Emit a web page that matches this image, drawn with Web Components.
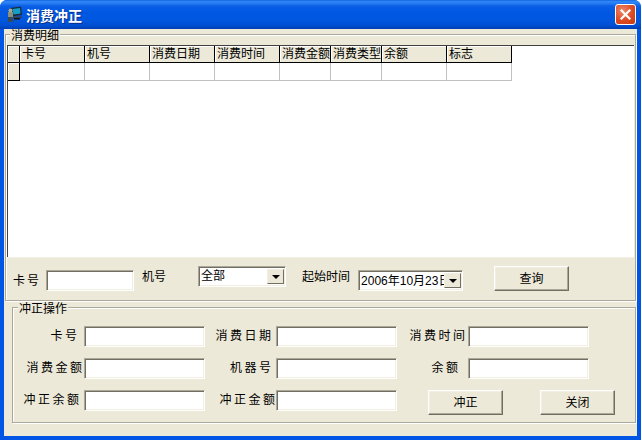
<!DOCTYPE html>
<html lang="zh"><head><meta charset="utf-8"><title>消费冲正</title>
<style>
html,body{margin:0;padding:0;background:#fff;overflow:hidden}
body{font:12px/16px "Liberation Sans","Noto Sans CJK SC",sans-serif;color:#000}
x-filter>*{flex:none}
</style></head><body>
<template id="t-window"><style>
:host{display:flex;flex-direction:column;width:641px;height:440px;box-sizing:border-box;background:#0055e5;border-radius:7px 7px 0 0;overflow:hidden}
.client{flex:1;margin:0 4px 4px 4px;background:#ece9d8;display:flex;flex-direction:column;padding:5px 1px 0 1px}
</style><slot name="title"></slot><div class="client"><slot></slot></div></template>

<template id="t-titlebar"><style>
:host{display:flex;align-items:center;height:29px;flex:none;box-sizing:border-box;padding:0 5px 0 7px;
background:linear-gradient(180deg,#0a58d8 0,#2f86f5 1px,#2a80f4 3px,#0a5fe6 6px,#0058e2 12px,#0056df 20px,#0050d4 25px,#0044c0 28px,#003cae 29px);color:#fff}
svg{flex:none;display:block}
.t{margin-left:3px;font:bold 14px/16px "Noto Sans CJK SC",sans-serif;text-shadow:1px 1px 0 #0a2f8c;white-space:nowrap}
.x{margin-left:auto;width:21px;height:21px;flex:none;box-sizing:border-box;border:1px solid #fff;border-radius:3px;background:radial-gradient(circle at 35% 30%,#f0896a,#dc4a22 55%,#c93a12);display:flex;align-items:center;justify-content:center}
</style>
<svg width="16" height="17" viewBox="0 0 16 17"><path d="M3 2L14 0.500L15 9L5 10.500Z" fill="#1d2c3c"/><path d="M5.500 3L13 2L13.500 7.500L6.500 8.500Z" fill="#12a0c8"/><rect x="6" y="10.500" width="9" height="1.500" fill="#39424c"/><rect x="1" y="6" width="5" height="5" fill="#8a8f80"/><circle cx="3.500" cy="4.500" r="2" fill="#b0a890"/><rect x="1" y="11" width="5" height="5" fill="#3a4a55"/><rect x="7" y="12" width="6" height="1.500" fill="#111"/></svg>
<span class="t"><slot></slot></span>
<span class="x"><svg width="11" height="11" viewBox="0 0 11 11"><path d="M1.500 1.500L9.500 9.500M9.500 1.500L1.500 9.500" stroke="#fff" stroke-width="2.200" stroke-linecap="square"/></svg></span></template>

<template id="t-group"><style>
:host{display:block;position:relative;box-sizing:border-box;border:1px solid #aca899;box-shadow:inset 1px 1px #fff,1px 1px #fff}
.legend{position:absolute;top:-6px;left:var(--legend-left,6px);background:#ece9d8;padding:0 1px;line-height:14px;white-space:nowrap}
</style><div class="legend"><slot name="legend"></slot></div><slot></slot></template>

<template id="t-grid"><style>
:host{display:block;box-sizing:border-box;background:#fff;height:212px;margin:10px 1px 0 1px;border-left:1px solid #404040;border-top:1px solid #404040;box-shadow:0 1px 0 #f1efe2}
.g{display:grid;grid-template-columns:12px 65px 65px 65px 65px 51px 51px 65px 65px;grid-template-rows:17px 18px;width:max-content}
.h{background:#ece9d8;box-sizing:border-box;border-right:1px solid #000;border-bottom:1px solid #000;box-shadow:inset 1px 1px #fff;padding:1px 0 0 2px;line-height:15px;white-space:nowrap;overflow:hidden}
.c{box-sizing:border-box;border-right:1px solid #c0c0c0;border-bottom:1px solid #c0c0c0}
.rh{background:#ece9d8;box-sizing:border-box;border-right:1px solid #000;border-bottom:1px solid #000;box-shadow:inset 1px 1px #fff}
</style><div class="g" id="g"></div></template>

<template id="t-filter"><style>
:host{display:flex;height:42px;align-items:flex-start;box-sizing:border-box}
</style><slot></slot></template>

<template id="t-label"><style>
:host{display:block;white-space:nowrap;line-height:16px}
</style><slot></slot></template>

<template id="t-input"><style>
:host{display:block;box-sizing:border-box;width:121px;height:21px;background:#fff;border:1px solid;border-color:#aca899 #fff #fff #aca899;box-shadow:inset 1px 1px #716f64,inset -1px -1px #f1efe2}
</style></template>

<template id="t-combo"><style>
:host{display:flex;box-sizing:border-box;height:21px;background:#fff;border:1px solid;border-color:#aca899 #fff #fff #aca899;box-shadow:inset 1px 1px #716f64,inset -1px -1px #f1efe2;padding:2px 1px 2px 2px}
.v{flex:1;min-width:0;overflow:hidden;white-space:nowrap;line-height:15px;margin-top:var(--vt,0)}
.b{flex:none;width:17px;box-sizing:border-box;background:#ece9d8;border:1px solid;border-color:#f1efe2 #716f64 #716f64 #f1efe2;display:flex;align-items:center;justify-content:center}
.a{width:0;height:0;border:4px solid transparent;border-top-color:#000;border-bottom:0}
</style><div class="v"><slot></slot></div><div class="b"><div class="a"></div></div></template>

<template id="t-button"><style>
:host{display:flex;align-items:center;justify-content:center;box-sizing:border-box;width:75px;height:25px;background:#ece9d8;border:1px solid;border-color:#fff #716f64 #716f64 #fff;box-shadow:inset -1px -1px #aca899,inset 1px 1px #f1efe2;white-space:nowrap}
</style><slot></slot></template>

<template id="t-field"><style>
:host{display:grid;grid-template-columns:71px 121px;align-items:center;height:21px}
.l{text-align:right;letter-spacing:2.500px;white-space:nowrap;line-height:16px;margin-top:-2px}
</style><div class="l" id="l"><slot></slot></div><x-input></x-input></template>

<x-window>
  <x-titlebar slot="title">消费冲正</x-titlebar>
  <x-group style="height:267px;--legend-left:4px">
    <span slot="legend">消费明细</span>
    <x-grid></x-grid>
    <x-filter>
      <x-label style="margin:16px 0 0 7px;letter-spacing:2px">卡号</x-label>
      <x-input style="width:88px;margin:13px 0 0 5px"></x-input>
      <x-label style="margin:12px 0 0 8px">机号</x-label>
      <x-combo style="width:88px;margin:9px 0 0 32px">全部</x-combo>
      <x-label style="margin:12px 0 0 16px">起始时间</x-label>
      <x-combo style="width:105px;margin:13px 0 0 8px;--vt:1px">2006年10月23日</x-combo>
      <x-button style="margin:9px 0 0 31px">查询</x-button>
    </x-filter>
  </x-group>
  <x-group style="height:116px;margin:6px 0 0 7px;--legend-left:5px;padding-top:18px">
    <span slot="legend">冲正操作</span>
    <x-form>
      <x-field gap="7">卡号</x-field><x-field gap="5">消费日期</x-field><x-field gap="3">消费时间</x-field>
      <x-field gap="2">消费金额</x-field><x-field gap="5">机器号</x-field><x-field gap="10">余额</x-field>
      <x-field gap="5">冲正余额</x-field><x-field gap="1">冲正金额</x-field>
      <x-actions><x-button>冲正</x-button><x-button>关闭</x-button></x-actions>
    </x-form>
  </x-group>
</x-window>

<template id="t-form"><style>
:host{display:grid;grid-template-columns:192px 192px 192px;grid-auto-rows:21px;row-gap:11px}
</style><slot></slot></template>
<template id="t-actions"><style>
:host{display:flex;gap:37px;padding-left:31px;height:25px;width:max-content}
</style><slot></slot></template>

<script>
function simple(name,id,extra){
  customElements.define(name,class extends HTMLElement{
    constructor(){super();this.attachShadow({mode:'open'}).appendChild(document.getElementById(id).content.cloneNode(true));}
    connectedCallback(){if(extra)extra(this);}
  });
}
simple('x-input','t-input');
simple('x-window','t-window');
simple('x-titlebar','t-titlebar');
simple('x-group','t-group');
simple('x-filter','t-filter');
simple('x-label','t-label');
simple('x-combo','t-combo');
simple('x-button','t-button');
simple('x-form','t-form');
simple('x-actions','t-actions');
simple('x-field','t-field',function(el){
  var l=el.shadowRoot.getElementById('l');
  l.style.paddingRight=el.getAttribute('gap')+'px';
  l.style.marginRight='-2.5px';
});
simple('x-grid','t-grid',function(el){
  var g=el.shadowRoot.getElementById('g');
  var heads=['','卡号','机号','消费日期','消费时间','消费金额','消费类型','余额','标志'];
  var html='';
  heads.forEach(function(h){html+='<div class="h">'+h+'</div>';});
  heads.forEach(function(h,i){html+='<div class="'+(i?'c':'rh')+'"></div>';});
  g.innerHTML=html;
});
</script>
</body></html>
